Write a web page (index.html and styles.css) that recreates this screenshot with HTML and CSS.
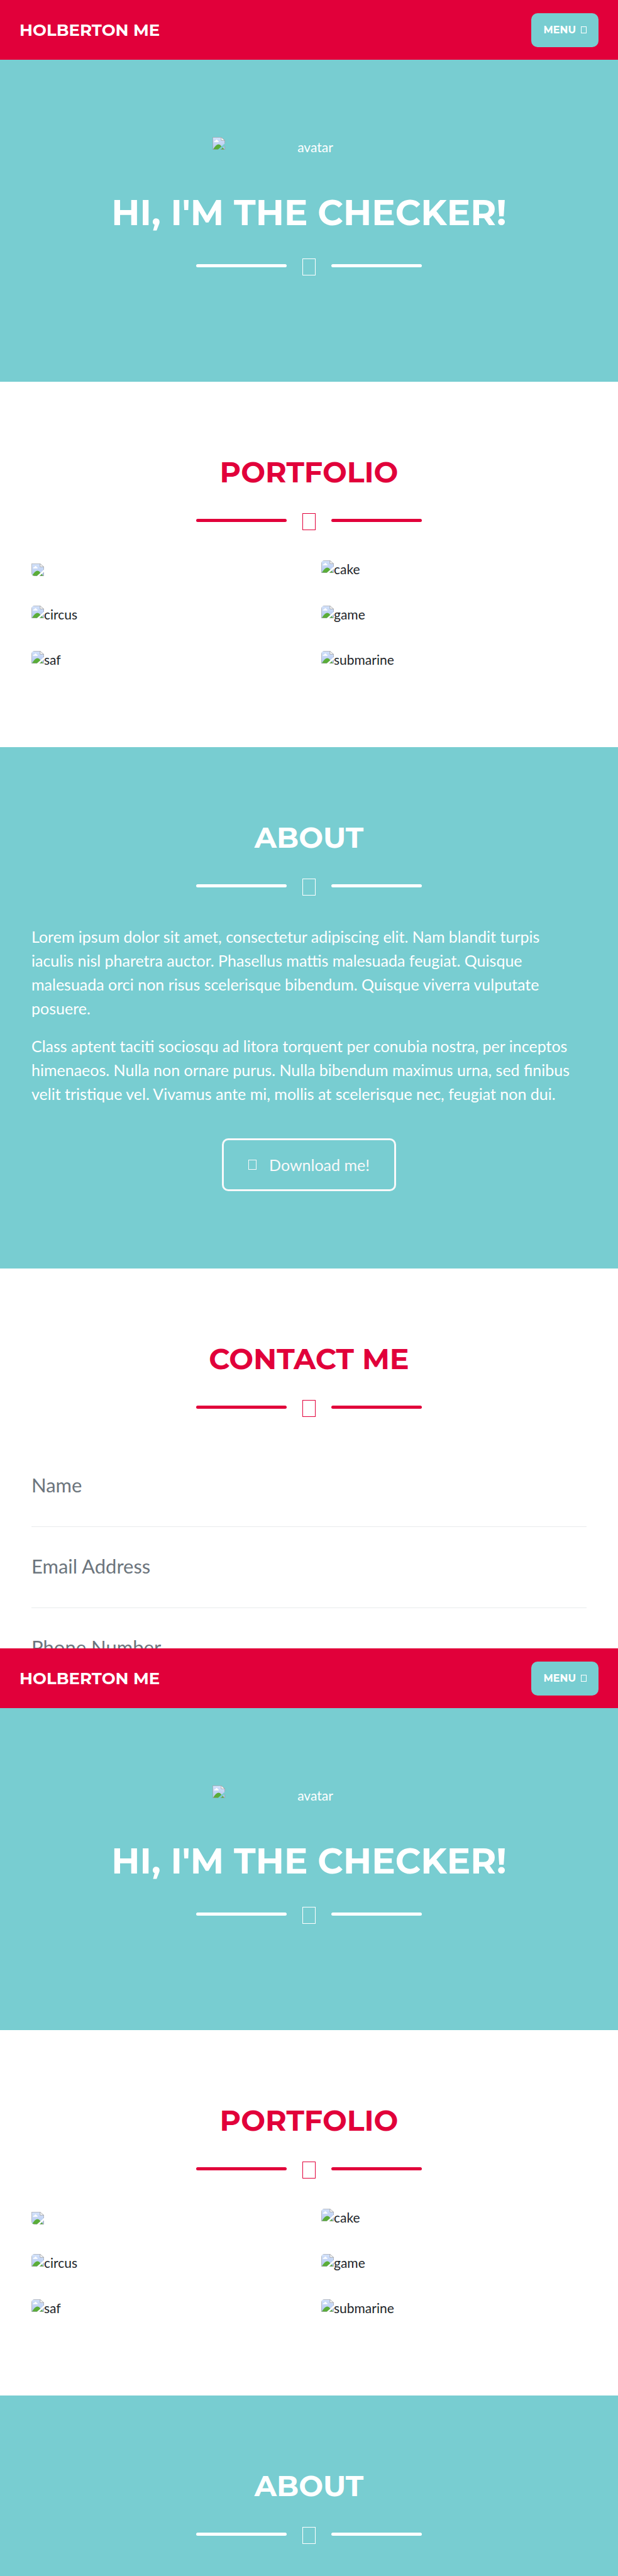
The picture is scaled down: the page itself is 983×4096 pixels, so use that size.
FILE: index.html
```
<!DOCTYPE html>
<html lang="en">
<head>
<meta charset="utf-8">
<title>Holberton Me</title>
<meta name="viewport" content="width=device-width, initial-scale=1">
<link rel="stylesheet" href="styles.css">
</head>
<body>
<svg class="defs" aria-hidden="true">
  <defs>
    <linearGradient id="sky" x1="0" y1="0" x2="0" y2="1">
      <stop offset="0" stop-color="#d3e2fb"/>
      <stop offset="1" stop-color="#b4c8ee"/>
    </linearGradient>
  </defs>
  <symbol id="broken" viewBox="0 0 32 32">
    <path d="M.5.5H22L31.500 9V16L14 31.500H.5Z" fill="url(#sky)"/>
    <path d="M3.500 12.500q0-3 4-3.500q3-5.500 6 0q2.500.5 2.500 3.500Z" fill="#fff"/>
    <path d="M1.500 31Q14 10 23 23.500L14 31.500Z" fill="#5aad38"/>
    <path d="M31.500 22V31.500H20.500Z" fill="#b4c8ee"/>
    <path d="M21 31.500L26.500 26.500L30 31.500Z" fill="#5aad38"/>
    <path d="M22 .5V8.500H31.500Z" fill="#f6f6f6"/>
    <path d="M14 31.500H.5V.5H22L31.500 8.500V16M22 .5V8.500H31.500M31.500 22V31.500H20.500" fill="none" stroke="#8f8f8f" stroke-width="1"/>
  </symbol>
</svg>

<nav class="navbar">
  <a class="brand" href="#top">HOLBERTON ME</a>
  <button class="menu" type="button">MENU <span class="glyph glyph-sm"></span></button>
</nav>
<header class="section teal masthead" id="top">
  <div class="avatar"><svg class="broken"><use href="#broken"/></svg><span>avatar</span></div>
  <h1>HI, I'M THE CHECKER!</h1>
  <div class="divider"><i class="line"></i><i class="glyph"></i><i class="line"></i></div>
</header>
<section class="section portfolio">
  <h2>PORTFOLIO</h2>
  <div class="divider"><i class="line"></i><i class="glyph"></i><i class="line"></i></div>
  <div class="grid">
    <div class="item item-empty"><svg class="broken"><use href="#broken"/></svg></div>
    <div class="item"><svg class="broken"><use href="#broken"/></svg><span>cake</span></div>
    <div class="item"><svg class="broken"><use href="#broken"/></svg><span>circus</span></div>
    <div class="item"><svg class="broken"><use href="#broken"/></svg><span>game</span></div>
    <div class="item"><svg class="broken"><use href="#broken"/></svg><span>saf</span></div>
    <div class="item"><svg class="broken"><use href="#broken"/></svg><span>submarine</span></div>
  </div>
</section>
<section class="section teal about">
  <h2>ABOUT</h2>
  <div class="divider"><i class="line"></i><i class="glyph"></i><i class="line"></i></div>
  <p>Lorem ipsum dolor sit amet, consectetur adipiscing elit. Nam blandit turpis iaculis nisl pharetra auctor. Phasellus mattis malesuada feugiat. Quisque malesuada orci non risus scelerisque bibendum. Quisque viverra vulputate posuere.</p>
  <p>Class aptent taciti sociosqu ad litora torquent per conubia nostra, per inceptos himenaeos. Nulla non ornare purus. Nulla bibendum maximus urna, sed finibus velit tristique vel. Vivamus ante mi, mollis at scelerisque nec, feugiat non dui.</p>
  <div class="actions"><a class="download" href="#download"><span class="glyph glyph-md"></span>Download me!</a></div>
</section>
<section class="section contact">
  <h2>CONTACT ME</h2>
  <div class="divider"><i class="line"></i><i class="glyph"></i><i class="line"></i></div>
  <form>
    <div class="field"><input type="text" aria-label="Name" placeholder="Name"></div>
    <div class="field"><input type="email" aria-label="Email Address" placeholder="Email Address"></div>
    <div class="field field-cut"><input type="tel" aria-label="Phone Number" placeholder="Phone Number"></div>
  </form>
</section>

<nav class="navbar">
  <a class="brand" href="#top">HOLBERTON ME</a>
  <button class="menu" type="button">MENU <span class="glyph glyph-sm"></span></button>
</nav>
<header class="section teal masthead">
  <div class="avatar"><svg class="broken"><use href="#broken"/></svg><span>avatar</span></div>
  <h1>HI, I'M THE CHECKER!</h1>
  <div class="divider"><i class="line"></i><i class="glyph"></i><i class="line"></i></div>
</header>
<section class="section portfolio">
  <h2>PORTFOLIO</h2>
  <div class="divider"><i class="line"></i><i class="glyph"></i><i class="line"></i></div>
  <div class="grid">
    <div class="item item-empty"><svg class="broken"><use href="#broken"/></svg></div>
    <div class="item"><svg class="broken"><use href="#broken"/></svg><span>cake</span></div>
    <div class="item"><svg class="broken"><use href="#broken"/></svg><span>circus</span></div>
    <div class="item"><svg class="broken"><use href="#broken"/></svg><span>game</span></div>
    <div class="item"><svg class="broken"><use href="#broken"/></svg><span>saf</span></div>
    <div class="item"><svg class="broken"><use href="#broken"/></svg><span>submarine</span></div>
  </div>
</section>
<section class="section teal about about-end">
  <h2>ABOUT</h2>
  <div class="divider"><i class="line"></i><i class="glyph"></i><i class="line"></i></div>
</section>
</body>
</html>
```
FILE: styles.css
```
:root {
  --red: #e1003a;
  --teal: #78cdd1;
  --heading: Montserrat, Inter, "Open Sans", sans-serif;
  --body: Lato, "Open Sans", sans-serif;
}
* { box-sizing: border-box; }
body {
  margin: 0;
  background: #fff;
  color: #212529;
  font: 400 21px/31px var(--body);
}
.defs {
  position: absolute;
  width: 0;
  height: 0;
}

.navbar {
  display: flex;
  align-items: center;
  justify-content: space-between;
  height: 95px;
  padding: 0 31px;
  background: var(--red);
}
.brand {
  color: #fff;
  font: 700 26px/38px var(--heading);
  text-decoration: none;
}
.menu {
  display: flex;
  align-items: center;
  gap: 8px;
  height: 54px;
  padding: 0 19px;
  border: 0;
  border-radius: 10px;
  background: var(--teal);
  color: #fff;
  font: 700 16px/24px var(--heading);
}

.section {
  padding: 123px 50px;
  color: var(--red);
}
.teal {
  background: var(--teal);
  color: #fff;
}
h1, h2 {
  margin: 0;
  font-family: var(--heading);
  font-weight: 700;
  text-align: center;
}
h1 { font-size: 56px; line-height: 56px; }
h2 { font-size: 46px; line-height: 41px; }

.avatar {
  display: flex;
  width: 307px;
  margin: 0 auto 61px;
}
.avatar span {
  flex: 1;
  text-align: center;
}
.broken {
  flex: none;
  width: 20px;
  height: 20px;
}

.divider {
  display: flex;
  align-items: center;
  justify-content: center;
  gap: 25px;
  height: 60px;
  margin: 26px 0 32px;
}
.line {
  width: 144px;
  height: 5px;
  border-radius: 3px;
  background: currentColor;
}
.glyph {
  width: 21px;
  height: 27px;
  margin-top: 5px;
  border: 1px solid currentColor;
}
.glyph-sm { width: 9px; height: 11px; margin: 0; }
.glyph-md { width: 13px; height: 16px; margin: 0; }

.portfolio { padding-bottom: 124px; }
.grid {
  display: grid;
  grid-template-columns: 1fr 1fr;
  gap: 41px 39px;
}
.item {
  display: flex;
  height: 31px;
  color: #212529;
}
.item .broken {
  margin-top: 2px;
  border-radius: 5px 0 0 0;
}
.item-empty { padding-top: 5px; }
.item-empty .broken { border-radius: 0 0 0 5px; }

.about p {
  margin: 0 0 22px;
  padding-right: 10px;
  font-size: 25px;
  line-height: 38px;
}
.actions {
  display: flex;
  justify-content: center;
  padding-top: 30px;
}
.download {
  display: flex;
  align-items: center;
  gap: 20px;
  height: 84px;
  padding: 0 39px;
  border: 3px solid #f8f9fa;
  border-radius: 10px;
  color: #f8f9fa;
  font-size: 25px;
  text-decoration: none;
}

.contact { padding-bottom: 0; }
.field {
  height: 129px;
  padding: 44px 0 47px;
  border-bottom: 1px solid #e9ebec;
}
.field input {
  display: block;
  width: 100%;
  height: 37px;
  padding: 0;
  border: 0;
  background: none;
  color: #212529;
  font: 400 31px/37px var(--body);
}
.field input::placeholder { color: #6c757d; opacity: 1; }
.field-cut {
  height: 64px;
  padding-bottom: 0;
  border-bottom: 0;
  overflow: hidden;
}
.about-end { padding-bottom: 5px; }
```
